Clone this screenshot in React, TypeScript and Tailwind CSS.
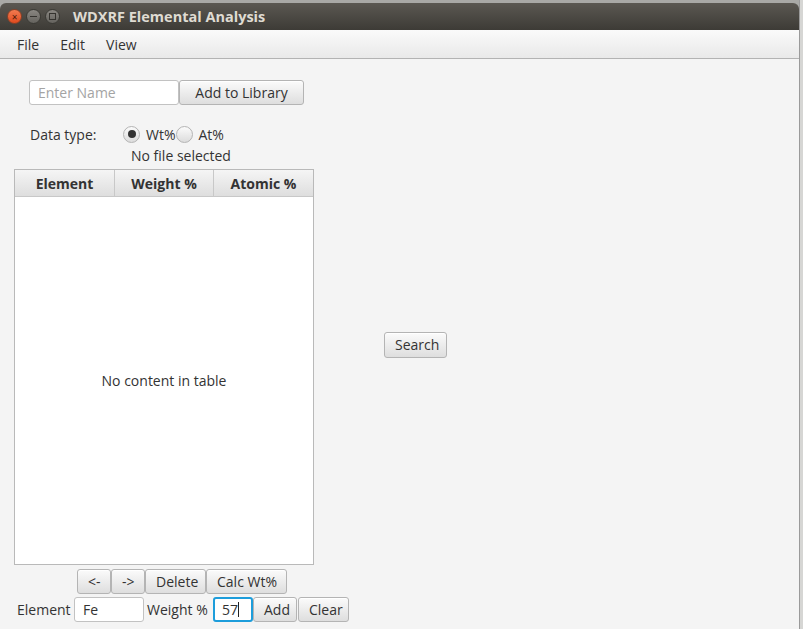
import React from "react"

const font = { fontFamily: '"Open Sans", "DejaVu Sans", sans-serif' }

function FxButton({ label, className = "" }: { label: string; className?: string }) {
  return (
    <button
      className={
        "h-[25px] whitespace-nowrap rounded-[3px] border border-[#b4b4b4] bg-gradient-to-b from-[#fbfbfb] to-[#dedede] text-[14px] text-[#333] px-[10px] leading-none shadow-[inset_0_1px_0_#ffffff] " +
        className
      }>
      {label}
    </button>
  )
}

function Radio({ checked }: { checked?: boolean }) {
  return (
    <div className="w-[17px] h-[17px] rounded-full border border-[#b4b4b4] bg-gradient-to-b from-[#fbfbfb] to-[#dcdcdc] flex items-center justify-center">
      {checked && <div className="w-[8px] h-[8px] rounded-full bg-[#333]"></div>}
    </div>
  )
}

export default function App() {
  return (
    <div className="w-[803px] h-[629px] bg-[#a9a9a6] flex overflow-hidden" style={font}>
      <div className="w-[799px] flex flex-col mt-[3px]">
        {/* title bar */}
        <div className="h-[27px] rounded-t-[6px] bg-gradient-to-b from-[#5b5852] to-[#3d3b36] flex items-center pl-[7px]">
          <div className="w-[15px] h-[15px] rounded-full bg-gradient-to-b from-[#f27a4f] to-[#df4a1d] border border-[#8a4026] flex items-center justify-center text-[#4a1a0a] text-[10px] leading-none">
            ×
          </div>
          <div className="w-[15px] h-[15px] ml-[4px] rounded-full bg-gradient-to-b from-[#8a8782] to-[#65635e] border border-[#3a3934] flex items-center justify-center">
            <div className="w-[7px] h-[1.5px] bg-[#35332f]"></div>
          </div>
          <div className="w-[15px] h-[15px] ml-[4px] rounded-full bg-gradient-to-b from-[#8a8782] to-[#65635e] border border-[#3a3934] flex items-center justify-center">
            <div className="w-[7px] h-[7px] border border-[#35332f]"></div>
          </div>
          <div className="ml-[13px] text-[14.5px] font-bold text-[#dfdbd2]">
            WDXRF Elemental Analysis
          </div>
        </div>

        {/* menu bar */}
        <div className="h-[29px] bg-gradient-to-b from-[#fafafa] to-[#e9e9e9] border-b border-[#b3b3b3] flex items-center text-[14px] text-[#333] pl-[17px] gap-[21px]">
          <span>File</span>
          <span>Edit</span>
          <span>View</span>
        </div>

        {/* content */}
        <div className="flex-1 bg-[#f4f4f4] flex text-[14px] text-[#333] whitespace-nowrap">
          <div className="flex flex-col pl-[14px] pt-[21px]">
            <div className="flex ml-[15px]">
              <div className="w-[150px] h-[25px] bg-white border border-[#c2c2c2] rounded-[3px] flex items-center pl-[8px] text-[#a4a4a4]">
                Enter Name
              </div>
              <FxButton label="Add to Library" className="w-[125px] px-0" />
            </div>
            <div className="flex items-center mt-[20px] ml-[16px] h-[18px]">
              <span className="w-[93px]">Data type:</span>
              <Radio checked />
              <span className="ml-[6px]">Wt%</span>
              <Radio />
              <span className="ml-[6px]">At%</span>
            </div>
            <div className="ml-[117px] mt-[4px] h-[18px] leading-[18px]">No file selected</div>
            <div className="mt-[4px] w-[300px] h-[396px] bg-white border border-[#b9b9b9] flex flex-col">
              <div className="h-[27px] flex bg-gradient-to-b from-[#f5f5f5] to-[#dedede] border-b border-[#c8c8c8] font-bold">
                <div className="w-[100px] flex items-center justify-center border-r border-[#c8c8c8]">Element</div>
                <div className="w-[99px] flex items-center justify-center border-r border-[#c8c8c8]">Weight %</div>
                <div className="flex-1 flex items-center justify-center">Atomic %</div>
              </div>
              <div className="flex-1 flex items-center justify-center pb-[1px]">No content in table</div>
            </div>
            <div className="flex mt-[4px] ml-[63px]">
              <FxButton label="<-" className="w-[34px] px-0" />
              <FxButton label="->" className="w-[34px] px-0" />
              <FxButton label="Delete" className="w-[61px] px-0" />
              <FxButton label="Calc Wt%" className="w-[81px] px-0" />
            </div>
            <div className="flex items-center mt-[3px] ml-[3px]">
              <span className="w-[57px]">Element</span>
              <div className="w-[70px] h-[25px] bg-white border border-[#c2c2c2] rounded-[3px] flex items-center pl-[8px]">Fe</div>
              <span className="ml-[3px] w-[66px]">Weight %</span>
              <div className="w-[40px] h-[25px] bg-white border-2 border-[#1d9ddb] rounded-[3px] flex items-center pl-[7px]">
                57<span className="w-[1px] h-[15px] bg-[#222]"></span>
              </div>
              <FxButton label="Add" className="w-[44px] px-0" />
              <FxButton label="Clear" className="w-[51px] px-0 ml-[1px]" />
            </div>
          </div>
          <div className="pl-[70px] pt-[273px]">
            <FxButton label="Search" className="w-[63px] h-[26px] px-0 -ml-[35px]" />
          </div>
        </div>
      </div>
      <div className="flex-1 bg-[#d6d6d4] border-l border-[#9a9a9a]"></div>
    </div>
  )
}
